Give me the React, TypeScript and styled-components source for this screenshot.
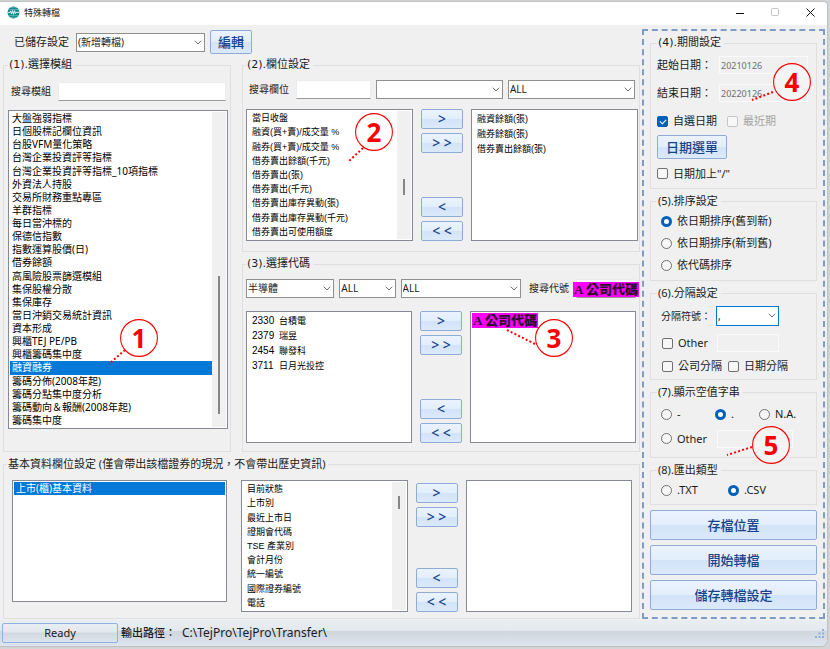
import React, { useState } from "react";
import styled, { createGlobalStyle, css } from "styled-components";

const uiFont = `"Noto Sans", "Noto Sans CJK TC", sans-serif`;
const wideFont = `"DejaVu Sans", "Noto Sans CJK TC", sans-serif`;
const listFont = `"Liberation Sans", "Noto Sans CJK TC", sans-serif`;

const GlobalStyle = createGlobalStyle`
  * { box-sizing: border-box; }
  body {
    margin: 0;
    background: #d4d5d6;
    color: #1b1b1b;
    font: 11px/16px ${uiFont};
  }
  button, input, select { font: inherit; color: inherit; }
`;

/* ---------- window frame ---------- */

const Page = styled.div`
  display: flex;
  min-height: 100vh;
  padding: 2px 3px 3px 0;
`;

const Window = styled.div`
  display: flex;
  flex: 1;
  min-width: 0;
  flex-direction: column;
  overflow: hidden;
  background: #f0f0f0;
  border-radius: 0 4px 6px 0;
  box-shadow: 0 0 2px #8e8e8e;
`;

const TitleBar = styled.header`
  display: flex;
  align-items: center;
  height: 23px;
  padding: 0 8px 2px 7px;
  background: #fff;
`;

const Title = styled.h1`
  flex: 1;
  margin: 0 0 0 4px;
  font-size: 9px;
  font-weight: 400;
`;

const WindowControls = styled.div`
  display: flex;
  gap: 18px;
`;

const ControlButton = styled.button`
  display: grid;
  place-items: center;
  width: 17px;
  height: 17px;
  padding: 0;
  border: 0;
  background: none;
`;

const Workspace = styled.main`
  display: grid;
  grid-template-columns: minmax(0, 1fr) 183px;
  flex: 1;
  gap: 2px;
  padding: 4px 2px 0 3px;
`;

const LeftArea = styled.div`
  display: flex;
  min-width: 0;
  flex-direction: column;
`;

const SavedRow = styled.div`
  display: flex;
  align-items: center;
  height: 28px;
  padding: 0 0 2px 11px;
`;

const SavedLabel = styled.label`
  width: 62px;
`;

const Columns = styled.div`
  display: grid;
  grid-template-columns: minmax(0, 228fr) minmax(0, 398fr);
  gap: 11px;
  margin-bottom: 4px;
`;

const Stack = styled.div`
  display: flex;
  flex-direction: column;
  gap: 4px;
`;

/* ---------- group boxes ---------- */

const Group = styled.fieldset<{ $pad: string }>`
  display: flex;
  min-width: 0;
  flex-direction: column;
  margin: 0;
  padding: ${(p) => p.$pad};
  border: 1px solid #dfdfdf;
`;

const Legend = styled.legend<{ $wide?: boolean }>`
  padding: 0 3px 0 1px;
  font-family: ${(p) => (p.$wide ? wideFont : uiFont)};
  white-space: nowrap;
`;

const FilterRow = styled.div<{ $gap: number; $end?: number }>`
  display: flex;
  align-items: center;
  gap: 5px;
  height: 20px;
  margin: 0 ${(p) => p.$end ?? 0}px ${(p) => p.$gap}px 0;
`;

const SmallLabel = styled.label`
  padding: 0 2px 0 3px;
  font-size: 10px;
  white-space: nowrap;
`;

/* ---------- controls ---------- */

const TextBox = styled.input<{ $grow?: number; $h?: number; $end?: number; $flat?: boolean }>`
  flex: ${(p) => p.$grow ?? 1} 1 0;
  min-width: 0;
  width: 0;
  height: ${(p) => p.$h ?? 19}px;
  margin: 0 ${(p) => p.$end ?? 0}px 0 0;
  padding: 0 1px;
  border: 1px solid #ececec;
  border-bottom-color: #9a9a9a;
  background: #fff;
  outline: none;
  ${(p) =>
    p.$flat &&
    css`
      border-color: #fafafa;
      background: #f0f0f0;
      color: #6f6f6f;
      font-size: 9px;
    `}
`;

const SelectShell = styled.div<{ $grow?: number; $width?: number; $focus?: boolean }>`
  position: relative;
  flex: ${(p) => (p.$width ? `0 0 ${p.$width}px` : `${p.$grow ?? 1} 1 0`)};
  min-width: 0;
  select {
    display: block;
    width: 100%;
    height: ${(p) => (p.$focus ? 20 : 19)}px;
    padding: 0 14px 1px 1px;
    border: 1px solid ${(p) => (p.$focus ? "#0078d7" : "#8f8f8f")};
    border-radius: 0;
    background: #fff;
    font-size: 10px;
    appearance: none;
    outline: none;
  }
  svg {
    position: absolute;
    top: 7px;
    right: 3px;
    pointer-events: none;
  }
`;

const BlueButton = styled.button<{ $size?: "move" | "small" | "large" }>`
  flex: none;
  padding: 0;
  border: 1px solid #8facd6;
  border-radius: 2px;
  background: linear-gradient(#eaf3fe 0%, #e3eefc 50%, #d3e3f8 51%, #dbe9fb 100%);
  color: #15428b;
  font-size: 13px;
  font-weight: 500;
  line-height: 16px;
  ${(p) =>
    p.$size === "move"
      ? css`
          height: 20px;
          font-size: 14px;
        `
      : p.$size === "large"
      ? css`
          height: 30px;
        `
      : css`
          height: 24px;
        `}
`;

const EditButton = styled(BlueButton)`
  width: 42px;
  margin-left: 5px;
`;

const CalendarButton = styled(BlueButton)`
  align-self: flex-start;
  width: 70px;
`;

/* ---------- list boxes ---------- */

const ListFrame = styled.div<{ $height: number }>`
  position: relative;
  display: flex;
  align-items: stretch;
  min-width: 0;
  height: ${(p) => p.$height}px;
  padding: 1px;
  border: 1px solid #868a93;
  background: #fff;
`;

const Items = styled.ul<{ $kind: "module" | "field" }>`
  display: flex;
  flex: 1;
  min-width: 0;
  flex-direction: column;
  margin: 0;
  padding: 0;
  overflow: hidden;
  list-style: none;
  font: ${(p) => (p.$kind === "module" ? `10px/13px ${uiFont}` : `9px/14px ${listFont}`)};
  color: #000;
`;

const Item = styled.li<{ $kind: "module" | "field"; $fill?: boolean; $selected?: boolean }>`
  display: flex;
  flex: ${(p) => (p.$fill ? "1 1 0" : "none")};
  align-items: center;
  height: ${(p) => (p.$kind === "module" ? "13px" : "15px")};
  padding-left: ${(p) => (p.$kind === "module" ? 2 : 4)}px;
  white-space: pre;
  ${(p) =>
    p.$selected &&
    css`
      background: #0078d7;
      color: #fff;
    `}
`;

const Code = styled.span`
  width: 27px;
  font-size: 10px;
`;

const Track = styled.div`
  flex: 0 0 14px;
  display: flex;
  justify-content: center;
  background: #f0f0f0;
`;

const Thumb = styled.div<{ $from: number; $to: number }>`
  align-self: flex-start;
  position: relative;
  top: ${(p) => p.$from}%;
  width: 2px;
  height: ${(p) => p.$to - p.$from}%;
  background: #868686;
`;

const Transfer = styled.div`
  display: grid;
  grid-template-columns: minmax(0, 1fr) 42px minmax(0, 1fr);
  gap: 8px;
`;

const MoveColumn = styled.div<{ $inset?: boolean }>`
  display: flex;
  flex-direction: column;
  gap: 4px;
  padding-top: ${(p) => (p.$inset ? 3 : 0)}px;
  > :nth-child(3) {
    margin-top: auto;
  }
`;

const BasicGrid = styled.div`
  display: grid;
  grid-template-columns: minmax(0, 215fr) minmax(0, 391fr);
  gap: 14px;
  padding-left: 5px;
`;

const Redaction = styled.span`
  display: block;
  align-self: flex-start;
  width: 66px;
  background: #f0f;
  color: #2b132b;
  font: 900 13px/15px "Liberation Serif", "Noto Sans CJK TC", serif;
  text-align: center;
  white-space: nowrap;
`;

const CodeSearch = styled.div`
  position: relative;
  display: flex;
  flex: 0 0 60px;
  ${Redaction} {
    position: absolute;
    top: 3px;
    left: -3px;
  }
`;

/* ---------- options panel ---------- */

const Options = styled.aside`
  display: flex;
  align-self: start;
  flex-direction: column;
  gap: 4px;
  padding: 4px 6px 7px;
  border: 2px dashed #7f9cc9;
`;

const OptionRow = styled.div<{ $h: number; $indent?: number }>`
  position: relative;
  display: flex;
  align-items: center;
  height: ${(p) => p.$h}px;
  padding-left: ${(p) => p.$indent ?? 0}px;
`;

const FieldLabel = styled.label<{ $small?: boolean }>`
  width: ${(p) => (p.$small ? 55 : 62)}px;
  font-size: ${(p) => (p.$small ? 10 : 11)}px;
  white-space: nowrap;
`;

const Choice = styled.label<{ $width?: number; $dim?: boolean }>`
  display: flex;
  align-items: center;
  gap: 5px;
  flex: none;
  width: ${(p) => (p.$width ? `${p.$width}px` : "auto")};
  color: ${(p) => (p.$dim ? "#a3a3a3" : "inherit")};
  white-space: nowrap;
`;

const Mark = styled.input<{ $dim?: boolean }>`
  display: grid;
  place-items: center;
  flex: none;
  width: 11px;
  height: 11px;
  margin: 0;
  border: 1px solid ${(p) => (p.$dim ? "#c6c6c6" : "#707070")};
  background: #f7f7f7;
  appearance: none;
  &[type="radio"] {
    border-radius: 50%;
  }
  &[type="checkbox"] {
    border-radius: 2px;
  }
  &[type="radio"]:checked {
    border: 3px solid #005fb8;
    background: #fff;
  }
  &[type="checkbox"]:checked {
    border-color: #005fb8;
    background: #005fb8;
  }
  &[type="checkbox"]:checked::after {
    content: "";
    width: 5px;
    height: 3px;
    margin-top: -1px;
    border: solid #fff;
    border-width: 0 0 1px 1px;
    transform: rotate(-45deg);
  }
`;

const Actions = styled.div`
  display: flex;
  flex-direction: column;
  gap: 5px;
  margin-top: 1px;
`;

/* ---------- status bar ---------- */

const StatusBar = styled.footer`
  display: flex;
  align-items: center;
  height: 26px;
  padding: 0 2px 0 2px;
  background: linear-gradient(#e9eef1 0%, #e2e9ee 40%, #cfd6de 44%, #dfe5ee 100%);
`;

const ReadyCell = styled.div`
  width: 116px;
  height: 20px;
  margin-right: 3px;
  border: 1px solid #8db2e3;
  border-radius: 2px;
  background: linear-gradient(#e9eef3 0%, #e2e8ee 45%, #d0d7df 50%, #dee4ec 100%);
  line-height: 18px;
  text-align: center;
`;

const PathLabel = styled.span`
  width: 61px;
  font-weight: 500;
`;

const PathValue = styled.span`
  flex: 1;
  font-size: 12px;
`;

/* ---------- numbered callouts over the lists ---------- */

const CalloutBox = styled.div<{ $x: string; $y: number }>`
  position: absolute;
  z-index: 2;
  left: ${(p) => p.$x};
  top: ${(p) => p.$y}px;
  width: 38px;
  height: 38px;
  color: #fb0000;
  font: 700 26px/38px "Open Sans", "Noto Sans", sans-serif;
  text-align: center;
  pointer-events: none;
  svg {
    position: absolute;
    z-index: -1;
    inset: 0;
    overflow: visible;
  }
`;

type CalloutProps = { n: number; x: string; y: number; from: [number, number]; to: [number, number]; filled?: boolean };

/* Line ends are offsets from the circle's top left corner. */
function Callout({ n, x, y, from, to, filled = true }: CalloutProps) {
  return (
    <CalloutBox $x={x} $y={y}>
      <svg width="38" height="38" viewBox="0 0 38 38" aria-hidden="true">
        <circle cx="19" cy="19" r="18.4" fill={filled ? "#fff" : "#f4f4f4"} stroke="#fb0000" strokeWidth="1.1" />
        <line
          x1={from[0]} y1={from[1]} x2={to[0]} y2={to[1]}
          stroke="#fb0000" strokeWidth="2" strokeDasharray="2 2.2"
        />
      </svg>
      {n}
    </CalloutBox>
  );
}

/* ---------- drawings ---------- */

const Chevron = () => (
  <svg width="8" height="5" viewBox="0 0 8 5" fill="none" stroke="#6b6b6b" aria-hidden="true">
    <path d="M0.8 0.7 4 4 7.2 0.7" />
  </svg>
);

const Logo = () => (
  <svg width="13" height="13" viewBox="0 0 13 13" aria-hidden="true">
    <circle cx="6.5" cy="6.5" r="5.9" fill="#128a8c" />
    <path d="M2.2 3.6h8.6M2.2 9.6h8.6M4 1.8c1.6-.8 3.4-.8 5 0M4 11.2c1.6.8 3.4.8 5 0" stroke="#6cc4c1" strokeWidth=".7" fill="none" />
    <path d="M1 6.6h1.7l.8-1.5 1 2.8 1-3.4 1 3.8 1-3.6 1 2.8.8-1.2H12" stroke="#fff" strokeWidth=".9" fill="none" />
  </svg>
);

const Grip = () => (
  <svg width="11" height="11" viewBox="0 0 11 11" fill="#8fb0dc" aria-hidden="true">
    <path d="M8 1h2v2H8zM8 4.5h2v2H8zM8 8h2v2H8zM4.5 4.5h2v2h-2zM4.5 8h2v2h-2zM1 8h2v2H1z" />
  </svg>
);

/* ---------- composed parts ---------- */

type SelectProps = { label: string; value: string; grow?: number; width?: number; id?: string; focus?: boolean };

function Select({ label, value, grow, width, id, focus }: SelectProps) {
  return (
    <SelectShell $grow={grow} $width={width} $focus={focus}>
      <select id={id} aria-label={label} defaultValue={value}>
        <option value={value}>{value}</option>
      </select>
      <Chevron />
    </SelectShell>
  );
}

type ListProps = {
  label: string;
  items: string[];
  height: number;
  kind?: "module" | "field";
  fill?: boolean;
  initial?: string;
  thumb?: [number, number];
  children?: React.ReactNode;
};

function ListBox({ label, items, height, kind = "field", fill, initial, thumb, children }: ListProps) {
  const [selected, setSelected] = useState(initial);
  return (
    <ListFrame $height={height}>
      <Items $kind={kind} role="listbox" aria-label={label}>
        {items.map((text) => {
          const code = /^(\d{4}) (.+)$/.exec(text);
          return (
            <Item
              key={text}
              role="option"
              aria-selected={text === selected}
              $kind={kind}
              $fill={fill}
              $selected={text === selected}
              onClick={() => setSelected(text)}
            >
              {code ? <><Code>{code[1]}</Code>{code[2]}</> : text}
            </Item>
          );
        })}
      </Items>
      {thumb && <Track><Thumb $from={thumb[0]} $to={thumb[1]} /></Track>}
      {children}
    </ListFrame>
  );
}

function MoveButtons({ inset }: { inset?: boolean }) {
  const moves: [string, string][] = [[">", "加入"], ["> >", "全部加入"], ["<", "移除"], ["< <", "全部移除"]];
  return (
    <MoveColumn $inset={inset}>
      {moves.map(([sign, name]) => (
        <BlueButton key={sign} type="button" $size="move" aria-label={name}>{sign}</BlueButton>
      ))}
    </MoveColumn>
  );
}

type OptionProps = { type: "radio" | "checkbox"; text: string; name?: string; on?: boolean; width?: number; dim?: boolean };

function Option({ type, text, name, on, width, dim }: OptionProps) {
  return (
    <Choice $width={width} $dim={dim}>
      <Mark type={type} name={name} defaultChecked={on} disabled={dim} $dim={dim} />
      {text}
    </Choice>
  );
}

const modules = [
  "大盤強弱指標", "日個股標記欄位資訊", "台股VFM量化策略", "台灣企業投資評等指標", "台灣企業投資評等指標_10項指標",
  "外資法人持股", "交易所財務重點專區", "羊群指標", "每日當沖標的", "保德信指數", "指數運算股價(日)", "借券餘額",
  "高風險股票篩選模組", "集保股權分散", "集保庫存", "當日沖銷交易統計資訊", "資本形成", "興櫃TEJ PE/PB",
  "興櫃籌碼集中度", "融資融券", "籌碼分佈(2008年起)", "籌碼分點集中度分析", "籌碼動向＆報酬(2008年起)", "籌碼集中度",
];
const fields = [
  "當日收盤", "融資(買+賣)/成交量 %", "融券(買+賣)/成交量 %", "借券賣出餘額(千元)", "借券賣出(張)", "借券賣出(千元)",
  "借券賣出庫存異動(張)", "借券賣出庫存異動(千元)", "借券賣出可使用額度",
];
const basics = ["目前狀態", "上市別", "最近上市日", "證期會代碼", "TSE 產業別", "會計月份", "統一編號", "國際證券編號", "電話"];

export default function App() {
  return (
    <>
      <GlobalStyle />
      <Page>
        <Window>
          <TitleBar>
            <Logo />
            <Title>特殊轉檔</Title>
            <WindowControls>
              <ControlButton type="button" aria-label="最小化">
                <svg width="9" height="9" stroke="#111"><path d="M0 5.5h8" /></svg>
              </ControlButton>
              <ControlButton type="button" aria-label="最大化" disabled>
                <svg width="9" height="9" fill="none" stroke="#c4c4c4"><rect x=".5" y=".5" width="7" height="7" rx="1" /></svg>
              </ControlButton>
              <ControlButton type="button" aria-label="關閉">
                <svg width="9" height="9" stroke="#111"><path d="M.5.5l8 8M8.5.5l-8 8" /></svg>
              </ControlButton>
            </WindowControls>
          </TitleBar>

          <Workspace>
            <LeftArea>
              <SavedRow>
                <SavedLabel htmlFor="saved">已儲存設定</SavedLabel>
                <Select id="saved" label="已儲存設定" value="(新增轉檔)" width={129} />
                <EditButton type="button" $size="small">編輯</EditButton>
              </SavedRow>

              <Columns>
                <Group $pad="8px 2px 21px 4px">
                  <Legend $wide>(1).選擇模組</Legend>
                  <FilterRow $gap={9} $end={2}>
                    <SmallLabel htmlFor="module-search">搜尋模組</SmallLabel>
                    <TextBox id="module-search" />
                  </FilterRow>
                  <ListBox
                    label="選擇模組" items={modules} height={319} kind="module" fill
                    initial="融資融券" thumb={[52, 96]}
                  >
                    <Callout n={1} x="111px" y={208} from={[5, 31]} to={[-11, 45]} />
                  </ListBox>
                </Group>

                <Stack>
                  <Group $pad="6px 1px 10px 3px">
                    <Legend $wide>(2).欄位設定</Legend>
                    <FilterRow $gap={10} $end={3}>
                      <SmallLabel htmlFor="field-search">搜尋欄位</SmallLabel>
                      <TextBox id="field-search" $grow={72} />
                      <Select label="欄位類別" value="" grow={129} />
                      <Select label="欄位範圍" value="ALL" grow={129} />
                    </FilterRow>
                    <Transfer>
                      <ListBox label="可選欄位" items={fields} height={132} fill thumb={[53, 66]}>
                        <Callout n={2} x="108px" y={3} from={[8, 35]} to={[-7, 49]} />
                      </ListBox>
                      <MoveButtons />
                      <ListBox label="已選欄位" items={["融資餘額(張)", "融券餘額(張)", "借券賣出餘額(張)"]} height={132} />
                    </Transfer>
                  </Group>

                  <Group $pad="6px 3px 8px 3px">
                    <Legend $wide>(3).選擇代碼</Legend>
                    <FilterRow $gap={13}>
                      <Select label="產業" value="半導體" grow={88} />
                      <Select label="市場" value="ALL" grow={56} />
                      <Select label="分類" value="ALL" grow={120} />
                      <SmallLabel htmlFor="code-search">搜尋代號</SmallLabel>
                      <CodeSearch>
                        <TextBox id="code-search" />
                        <Redaction>A 公司代碼</Redaction>
                      </CodeSearch>
                    </FilterRow>
                    <Transfer>
                      <ListBox label="可選代碼" items={["2330 台積電", "2379 瑞昱", "2454 聯發科", "3711 日月光投控"]} height={132} />
                      <MoveButtons />
                      <ListFrame $height={132} role="listbox" aria-label="已選代碼">
                        <Redaction role="option">A 公司代碼</Redaction>
                        <Callout n={3} x="64px" y={7} from={[0, 25]} to={[-28, 11]} />
                      </ListFrame>
                    </Transfer>
                  </Group>
                </Stack>
              </Columns>

              <Group $pad="8px 7px 6px 3px">
                <Legend>基本資料欄位設定 (僅會帶出該檔證券的現況，不會帶出歷史資訊)</Legend>
                <BasicGrid>
                  <ListBox label="基本資料" items={["上市(櫃)基本資料"]} height={122} kind="module" initial="上市(櫃)基本資料" />
                  <Transfer>
                    <ListBox label="可選基本欄位" items={basics} height={132} fill thumb={[11, 21]} />
                    <MoveButtons inset />
                    <ListBox label="已選基本欄位" items={[]} height={132} />
                  </Transfer>
                </BasicGrid>
              </Group>
            </LeftArea>

            <Options>
              <Group $pad="0 6px">
                <Legend $wide>(4).期間設定</Legend>
                <OptionRow $h={28}>
                  <FieldLabel htmlFor="start">起始日期：</FieldLabel>
                  <TextBox id="start" $flat $h={18} $end={2} defaultValue="20210126" />
                </OptionRow>
                <OptionRow $h={28}>
                  <FieldLabel htmlFor="end">結束日期：</FieldLabel>
                  <TextBox id="end" $flat $h={18} $end={2} defaultValue="20220126" />
                  <Callout n={4} x="116px" y={-16} from={[0, 29]} to={[-21, 37]} filled={false} />
                </OptionRow>
                <OptionRow $h={28}>
                  <Option type="checkbox" text="自選日期" on width={70} />
                  <Option type="checkbox" text="最近期" dim />
                </OptionRow>
                <CalendarButton type="button" $size="small">日期選單</CalendarButton>
                <OptionRow $h={29}>
                  <Option type="checkbox" text={'日期加上"/"'} />
                </OptionRow>
              </Group>

              <Group $pad="1px 6px 4px">
                <Legend>(5).排序設定</Legend>
                <OptionRow $h={22} $indent={4}><Option type="radio" name="sort" text="依日期排序(舊到新)" on /></OptionRow>
                <OptionRow $h={22} $indent={4}><Option type="radio" name="sort" text="依日期排序(新到舊)" /></OptionRow>
                <OptionRow $h={22} $indent={4}><Option type="radio" name="sort" text="依代碼排序" /></OptionRow>
              </Group>

              <Group $pad="1px 6px 3px">
                <Legend>(6).分隔設定</Legend>
                <OptionRow $h={28} $indent={4}>
                  <FieldLabel htmlFor="separator" $small>分隔符號：</FieldLabel>
                  <Select id="separator" label="分隔符號" value="," width={63} focus />
                </OptionRow>
                <OptionRow $h={26} $indent={5}>
                  <Option type="checkbox" text="Other" width={55} />
                  <TextBox aria-label="其他分隔符號" $flat $h={18} $end={31} />
                </OptionRow>
                <OptionRow $h={20} $indent={5}>
                  <Option type="checkbox" text="公司分隔" width={66} />
                  <Option type="checkbox" text="日期分隔" />
                </OptionRow>
              </Group>

              <Group $pad="2px 6px 6px">
                <Legend>(7).顯示空值字串</Legend>
                <OptionRow $h={24} $indent={4}>
                  <Option type="radio" name="blank" text="-" width={54} />
                  <Option type="radio" name="blank" text="." on width={44} />
                  <Option type="radio" name="blank" text="N.A." />
                </OptionRow>
                <OptionRow $h={25} $indent={4}>
                  <Option type="radio" name="blank" text="Other" width={56} />
                  <TextBox aria-label="其他空值字串" $flat $h={18} $end={17} />
                  <Callout n={5} x="95px" y={0} from={[0, 21]} to={[-25, 29]} filled={false} />
                </OptionRow>
              </Group>

              <Group $pad="0 6px 2px">
                <Legend>(8).匯出類型</Legend>
                <OptionRow $h={24} $indent={4}>
                  <Option type="radio" name="format" text=".TXT" width={67} />
                  <Option type="radio" name="format" text=".CSV" on />
                </OptionRow>
              </Group>

              <Actions>
                <BlueButton type="button" $size="large">存檔位置</BlueButton>
                <BlueButton type="button" $size="large">開始轉檔</BlueButton>
                <BlueButton type="button" $size="large">儲存轉檔設定</BlueButton>
              </Actions>
            </Options>
          </Workspace>

          <StatusBar>
            <ReadyCell>Ready</ReadyCell>
            <PathLabel>輸出路徑：</PathLabel>
            <PathValue>C:\TejPro\TejPro\Transfer\</PathValue>
            <Grip />
          </StatusBar>
        </Window>
      </Page>
    </>
  );
}
